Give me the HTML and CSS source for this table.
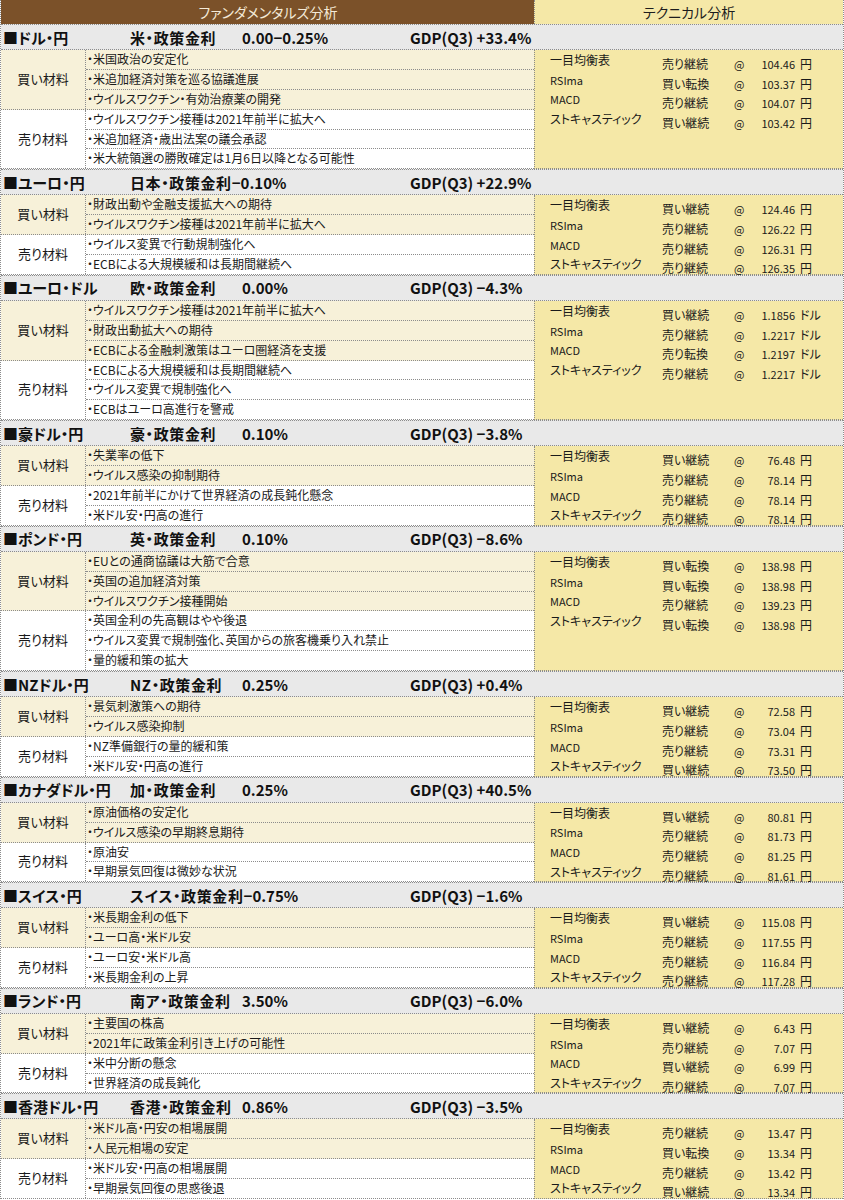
FILE: index.html
```html
<!DOCTYPE html>
<html lang="ja">
<head>
<meta charset="utf-8">
<title>ファンダメンタルズ分析・テクニカル分析</title>
<link rel="stylesheet" href="styles.css">
</head>
<body>
<div class="sheet">
  <div class="head">
    <div class="h-fund">ファンダメンタルズ分析</div>
    <div class="h-tech">テクニカル分析</div>
  </div>

  <section class="pair">
    <div class="title"><span class="nm">■ドル・円</span><span class="mid"><span class="pol">米・政策金利</span><span class="rate">0.00−0.25%</span></span><span class="gdp">GDP(Q3) +33.4%</span></div>
    <div class="body">
      <div class="fund">
        <div class="grp buy"><div class="lbl">買い材料</div><ul class="items"><li>・米国政治の安定化</li><li>・米追加経済対策を巡る協議進展</li><li>・ウイルスワクチン・有効治療薬の開発</li></ul></div>
        <div class="grp sell"><div class="lbl">売り材料</div><ul class="items"><li>・ウイルスワクチン接種は2021年前半に拡大へ</li><li>・米追加経済・歳出法案の議会承認</li><li>・米大統領選の勝敗確定は1月6日以降となる可能性</li></ul></div>
      </div>
      <div class="tech">
        <div class="trow"><span class="tn">一目均衡表</span><span class="ts">売り継続</span><span class="at">@</span><span class="tv">104.46</span><span class="tu">円</span></div>
        <div class="trow"><span class="tn lat">RSIma</span><span class="ts">買い転換</span><span class="at">@</span><span class="tv">103.37</span><span class="tu">円</span></div>
        <div class="trow"><span class="tn lat">MACD</span><span class="ts">売り継続</span><span class="at">@</span><span class="tv">104.07</span><span class="tu">円</span></div>
        <div class="trow"><span class="tn">ストキャスティック</span><span class="ts">買い継続</span><span class="at">@</span><span class="tv">103.42</span><span class="tu">円</span></div>
      </div>
    </div>
  </section>

  <section class="pair">
    <div class="title"><span class="nm">■ユーロ・円</span><span class="mid"><span class="pol tight">日本・政策金利</span><span class="rate">−0.10%</span></span><span class="gdp">GDP(Q3) +22.9%</span></div>
    <div class="body">
      <div class="fund">
        <div class="grp buy"><div class="lbl">買い材料</div><ul class="items"><li>・財政出動や金融支援拡大への期待</li><li>・ウイルスワクチン接種は2021年前半に拡大へ</li></ul></div>
        <div class="grp sell"><div class="lbl">売り材料</div><ul class="items"><li>・ウイルス変異で行動規制強化へ</li><li>・ECBによる大規模緩和は長期間継続へ</li></ul></div>
      </div>
      <div class="tech">
        <div class="trow"><span class="tn">一目均衡表</span><span class="ts">買い継続</span><span class="at">@</span><span class="tv">124.46</span><span class="tu">円</span></div>
        <div class="trow"><span class="tn lat">RSIma</span><span class="ts">売り継続</span><span class="at">@</span><span class="tv">126.22</span><span class="tu">円</span></div>
        <div class="trow"><span class="tn lat">MACD</span><span class="ts">売り継続</span><span class="at">@</span><span class="tv">126.31</span><span class="tu">円</span></div>
        <div class="trow"><span class="tn">ストキャスティック</span><span class="ts">売り継続</span><span class="at">@</span><span class="tv">126.35</span><span class="tu">円</span></div>
      </div>
    </div>
  </section>

  <section class="pair">
    <div class="title"><span class="nm">■ユーロ・ドル</span><span class="mid"><span class="pol">欧・政策金利</span><span class="rate">0.00%</span></span><span class="gdp">GDP(Q3) −4.3%</span></div>
    <div class="body">
      <div class="fund">
        <div class="grp buy"><div class="lbl">買い材料</div><ul class="items"><li>・ウイルスワクチン接種は2021年前半に拡大へ</li><li>・財政出動拡大への期待</li><li>・ECBによる金融刺激策はユーロ圏経済を支援</li></ul></div>
        <div class="grp sell"><div class="lbl">売り材料</div><ul class="items"><li>・ECBによる大規模緩和は長期間継続へ</li><li>・ウイルス変異で規制強化へ</li><li>・ECBはユーロ高進行を警戒</li></ul></div>
      </div>
      <div class="tech">
        <div class="trow"><span class="tn">一目均衡表</span><span class="ts">買い継続</span><span class="at">@</span><span class="tv">1.1856</span><span class="tu">ドル</span></div>
        <div class="trow"><span class="tn lat">RSIma</span><span class="ts">売り継続</span><span class="at">@</span><span class="tv">1.2217</span><span class="tu">ドル</span></div>
        <div class="trow"><span class="tn lat">MACD</span><span class="ts">売り転換</span><span class="at">@</span><span class="tv">1.2197</span><span class="tu">ドル</span></div>
        <div class="trow"><span class="tn">ストキャスティック</span><span class="ts">売り継続</span><span class="at">@</span><span class="tv">1.2217</span><span class="tu">ドル</span></div>
      </div>
    </div>
  </section>

  <section class="pair">
    <div class="title"><span class="nm">■豪ドル・円</span><span class="mid"><span class="pol">豪・政策金利</span><span class="rate">0.10%</span></span><span class="gdp">GDP(Q3) −3.8%</span></div>
    <div class="body">
      <div class="fund">
        <div class="grp buy"><div class="lbl">買い材料</div><ul class="items"><li>・失業率の低下</li><li>・ウイルス感染の抑制期待</li></ul></div>
        <div class="grp sell"><div class="lbl">売り材料</div><ul class="items"><li>・2021年前半にかけて世界経済の成長鈍化懸念</li><li>・米ドル安・円高の進行</li></ul></div>
      </div>
      <div class="tech">
        <div class="trow"><span class="tn">一目均衡表</span><span class="ts">買い継続</span><span class="at">@</span><span class="tv">76.48</span><span class="tu">円</span></div>
        <div class="trow"><span class="tn lat">RSIma</span><span class="ts">売り継続</span><span class="at">@</span><span class="tv">78.14</span><span class="tu">円</span></div>
        <div class="trow"><span class="tn lat">MACD</span><span class="ts">売り継続</span><span class="at">@</span><span class="tv">78.14</span><span class="tu">円</span></div>
        <div class="trow"><span class="tn">ストキャスティック</span><span class="ts">売り継続</span><span class="at">@</span><span class="tv">78.14</span><span class="tu">円</span></div>
      </div>
    </div>
  </section>

  <section class="pair">
    <div class="title"><span class="nm">■ポンド・円</span><span class="mid"><span class="pol">英・政策金利</span><span class="rate">0.10%</span></span><span class="gdp">GDP(Q3) −8.6%</span></div>
    <div class="body">
      <div class="fund">
        <div class="grp buy"><div class="lbl">買い材料</div><ul class="items"><li>・EUとの通商協議は大筋で合意</li><li>・英国の追加経済対策</li><li>・ウイルスワクチン接種開始</li></ul></div>
        <div class="grp sell"><div class="lbl">売り材料</div><ul class="items"><li>・英国金利の先高観はやや後退</li><li>・ウイルス変異で規制強化、英国からの旅客機乗り入れ禁止</li><li>・量的緩和策の拡大</li></ul></div>
      </div>
      <div class="tech">
        <div class="trow"><span class="tn">一目均衡表</span><span class="ts">買い転換</span><span class="at">@</span><span class="tv">138.98</span><span class="tu">円</span></div>
        <div class="trow"><span class="tn lat">RSIma</span><span class="ts">買い転換</span><span class="at">@</span><span class="tv">138.98</span><span class="tu">円</span></div>
        <div class="trow"><span class="tn lat">MACD</span><span class="ts">売り継続</span><span class="at">@</span><span class="tv">139.23</span><span class="tu">円</span></div>
        <div class="trow"><span class="tn">ストキャスティック</span><span class="ts">買い転換</span><span class="at">@</span><span class="tv">138.98</span><span class="tu">円</span></div>
      </div>
    </div>
  </section>

  <section class="pair">
    <div class="title"><span class="nm">■NZドル・円</span><span class="mid"><span class="pol">NZ・政策金利</span><span class="rate">0.25%</span></span><span class="gdp">GDP(Q3) +0.4%</span></div>
    <div class="body">
      <div class="fund">
        <div class="grp buy"><div class="lbl">買い材料</div><ul class="items"><li>・景気刺激策への期待</li><li>・ウイルス感染抑制</li></ul></div>
        <div class="grp sell"><div class="lbl">売り材料</div><ul class="items"><li>・NZ準備銀行の量的緩和策</li><li>・米ドル安・円高の進行</li></ul></div>
      </div>
      <div class="tech">
        <div class="trow"><span class="tn">一目均衡表</span><span class="ts">買い継続</span><span class="at">@</span><span class="tv">72.58</span><span class="tu">円</span></div>
        <div class="trow"><span class="tn lat">RSIma</span><span class="ts">売り継続</span><span class="at">@</span><span class="tv">73.04</span><span class="tu">円</span></div>
        <div class="trow"><span class="tn lat">MACD</span><span class="ts">売り継続</span><span class="at">@</span><span class="tv">73.31</span><span class="tu">円</span></div>
        <div class="trow"><span class="tn">ストキャスティック</span><span class="ts">買い継続</span><span class="at">@</span><span class="tv">73.50</span><span class="tu">円</span></div>
      </div>
    </div>
  </section>

  <section class="pair">
    <div class="title"><span class="nm">■カナダドル・円</span><span class="mid"><span class="pol">加・政策金利</span><span class="rate">0.25%</span></span><span class="gdp">GDP(Q3) +40.5%</span></div>
    <div class="body">
      <div class="fund">
        <div class="grp buy"><div class="lbl">買い材料</div><ul class="items"><li>・原油価格の安定化</li><li>・ウイルス感染の早期終息期待</li></ul></div>
        <div class="grp sell"><div class="lbl">売り材料</div><ul class="items"><li>・原油安</li><li>・早期景気回復は微妙な状況</li></ul></div>
      </div>
      <div class="tech">
        <div class="trow"><span class="tn">一目均衡表</span><span class="ts">買い継続</span><span class="at">@</span><span class="tv">80.81</span><span class="tu">円</span></div>
        <div class="trow"><span class="tn lat">RSIma</span><span class="ts">売り継続</span><span class="at">@</span><span class="tv">81.73</span><span class="tu">円</span></div>
        <div class="trow"><span class="tn lat">MACD</span><span class="ts">売り継続</span><span class="at">@</span><span class="tv">81.25</span><span class="tu">円</span></div>
        <div class="trow"><span class="tn">ストキャスティック</span><span class="ts">売り継続</span><span class="at">@</span><span class="tv">81.61</span><span class="tu">円</span></div>
      </div>
    </div>
  </section>

  <section class="pair">
    <div class="title"><span class="nm">■スイス・円</span><span class="mid"><span class="pol tight">スイス・政策金利</span><span class="rate">−0.75%</span></span><span class="gdp">GDP(Q3) −1.6%</span></div>
    <div class="body">
      <div class="fund">
        <div class="grp buy"><div class="lbl">買い材料</div><ul class="items"><li>・米長期金利の低下</li><li>・ユーロ高・米ドル安</li></ul></div>
        <div class="grp sell"><div class="lbl">売り材料</div><ul class="items"><li>・ユーロ安・米ドル高</li><li>・米長期金利の上昇</li></ul></div>
      </div>
      <div class="tech">
        <div class="trow"><span class="tn">一目均衡表</span><span class="ts">買い継続</span><span class="at">@</span><span class="tv">115.08</span><span class="tu">円</span></div>
        <div class="trow"><span class="tn lat">RSIma</span><span class="ts">売り継続</span><span class="at">@</span><span class="tv">117.55</span><span class="tu">円</span></div>
        <div class="trow"><span class="tn lat">MACD</span><span class="ts">売り継続</span><span class="at">@</span><span class="tv">116.84</span><span class="tu">円</span></div>
        <div class="trow"><span class="tn">ストキャスティック</span><span class="ts">売り継続</span><span class="at">@</span><span class="tv">117.28</span><span class="tu">円</span></div>
      </div>
    </div>
  </section>

  <section class="pair">
    <div class="title"><span class="nm">■ランド・円</span><span class="mid"><span class="pol">南ア・政策金利</span><span class="rate">3.50%</span></span><span class="gdp">GDP(Q3) −6.0%</span></div>
    <div class="body">
      <div class="fund">
        <div class="grp buy"><div class="lbl">買い材料</div><ul class="items"><li>・主要国の株高</li><li>・2021年に政策金利引き上げの可能性</li></ul></div>
        <div class="grp sell"><div class="lbl">売り材料</div><ul class="items"><li>・米中分断の懸念</li><li>・世界経済の成長鈍化</li></ul></div>
      </div>
      <div class="tech">
        <div class="trow"><span class="tn">一目均衡表</span><span class="ts">買い継続</span><span class="at">@</span><span class="tv">6.43</span><span class="tu">円</span></div>
        <div class="trow"><span class="tn lat">RSIma</span><span class="ts">売り継続</span><span class="at">@</span><span class="tv">7.07</span><span class="tu">円</span></div>
        <div class="trow"><span class="tn lat">MACD</span><span class="ts">買い継続</span><span class="at">@</span><span class="tv">6.99</span><span class="tu">円</span></div>
        <div class="trow"><span class="tn">ストキャスティック</span><span class="ts">売り継続</span><span class="at">@</span><span class="tv">7.07</span><span class="tu">円</span></div>
      </div>
    </div>
  </section>

  <section class="pair">
    <div class="title"><span class="nm">■香港ドル・円</span><span class="mid"><span class="pol">香港・政策金利</span><span class="rate">0.86%</span></span><span class="gdp">GDP(Q3) −3.5%</span></div>
    <div class="body">
      <div class="fund">
        <div class="grp buy"><div class="lbl">買い材料</div><ul class="items"><li>・米ドル高・円安の相場展開</li><li>・人民元相場の安定</li></ul></div>
        <div class="grp sell"><div class="lbl">売り材料</div><ul class="items"><li>・米ドル安・円高の相場展開</li><li>・早期景気回復の思惑後退</li></ul></div>
      </div>
      <div class="tech">
        <div class="trow"><span class="tn">一目均衡表</span><span class="ts">売り継続</span><span class="at">@</span><span class="tv">13.47</span><span class="tu">円</span></div>
        <div class="trow"><span class="tn lat">RSIma</span><span class="ts">買い転換</span><span class="at">@</span><span class="tv">13.34</span><span class="tu">円</span></div>
        <div class="trow"><span class="tn lat">MACD</span><span class="ts">売り継続</span><span class="at">@</span><span class="tv">13.42</span><span class="tu">円</span></div>
        <div class="trow"><span class="tn">ストキャスティック</span><span class="ts">買い継続</span><span class="at">@</span><span class="tv">13.34</span><span class="tu">円</span></div>
      </div>
    </div>
  </section>
</div>
</body>
</html>
```

FILE: styles.css
```css
* { box-sizing: border-box; }

html, body {
  margin: 0;
  padding: 0;
  background: #ffffff;
}

body {
  font-family: "Noto Sans CJK JP", "Noto Sans", sans-serif;
  font-feature-settings: "palt";
  color: #1a1a1a;
  font-size: 12px;
}

.sheet {
  width: 844px;
  border-left: 1px dotted #8c8c8c;
  border-right: 1px dotted #8c8c8c;
}

/* header */
.head {
  display: flex;
  height: 24px;
}

.h-fund {
  width: 533px;
  background: #7b5129;
  color: #f4ead8;
  font-size: 14px;
  display: flex;
  align-items: center;
  justify-content: center;
  padding-left: 1px;
}

.h-tech {
  flex: 1;
  background: #f5e8a7;
  color: #1d1d1d;
  font-size: 14px;
  display: flex;
  align-items: center;
  justify-content: center;
  border-left: 1px dotted #8c8c8c;
}

/* section */
.title {
  display: flex;
  align-items: center;
  height: 26px;
  background: #e9e9e9;
  border-top: 1px dotted #8c8c8c;
  border-bottom: 1px dotted #8c8c8c;
  font-size: 15px;
  font-weight: bold;
  color: #111;
  white-space: nowrap;
}

.nm {
  width: 129px;
  flex: none;
  padding-left: 2px;
}

.mid {
  width: 280px;
  flex: none;
}

.pol {
  display: inline-block;
  min-width: 112px;
  letter-spacing: 0.6px;
}

.pol.tight {
  min-width: 0;
}

.rate {
  letter-spacing: 0;
}

.gdp {
  letter-spacing: 0;
}

.body {
  display: flex;
}

.fund {
  width: 533px;
  flex: none;
}

.grp {
  display: flex;
  border-bottom: 1px dotted #8c8c8c;
}

.grp.buy {
  background: #f7f1d9;
}

.grp.sell {
  background: #ffffff;
}

.lbl {
  width: 85px;
  flex: none;
  display: flex;
  align-items: center;
  justify-content: center;
  border-right: 1px dotted #8c8c8c;
  font-size: 13px;
  padding-bottom: 2px;
}

.items {
  list-style: none;
  margin: 0;
  padding: 0;
  flex: 1;
}

.items li {
  height: 19.9px;
  line-height: 18px;
  padding-left: 1px;
  border-bottom: 1px dotted #8c8c8c;
  white-space: nowrap;
}

.items li:last-child {
  border-bottom: none;
  height: 18.9px;
}

/* technical */
.tech {
  flex: 1;
  contain: size;
  background: #f5e8a7;
  border-left: 1px dotted #8c8c8c;
  border-bottom: 1px dotted #8c8c8c;
  padding-top: 2px;
}

.trow {
  display: flex;
  align-items: flex-start;
  height: 19.7px;
  padding-left: 15px;
  white-space: nowrap;
}

.tn {
  width: 112px;
  flex: none;
  font-size: 12px;
  line-height: 16px;
}

.tn.lat {
  font-size: 11px;
}

.ts {
  width: 72px;
  flex: none;
  padding-top: 4px;
  line-height: 16px;
}

.at {
  width: 24px;
  flex: none;
  padding-top: 4px;
  line-height: 16px;
  font-size: 11px;
}

.tv {
  width: 37px;
  flex: none;
  text-align: right;
  padding-top: 4px;
  line-height: 16px;
  font-size: 11px;
}

.tu {
  padding-top: 4px;
  padding-left: 5px;
  line-height: 16px;
  font-size: 12px;
}
```
